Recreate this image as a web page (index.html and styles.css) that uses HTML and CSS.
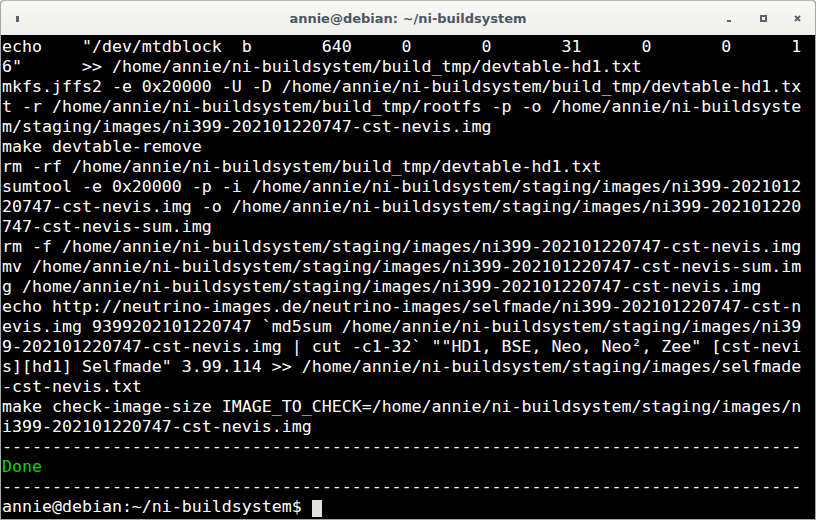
FILE: index.html
```html
<!DOCTYPE html>
<html>
<head>
<meta charset="utf-8">
<link rel="stylesheet" href="styles.css">
</head>
<body>
<div class="window">
  <div class="titlebar">
    <div class="tb-left"><span class="app-icon"></span></div>
    <div class="title">annie@debian: ~/ni-buildsystem</div>
    <div class="tb-right">
      <span class="btn btn-min"></span>
      <span class="btn btn-max"></span>
      <span class="btn btn-close">
        <svg width="7" height="7" viewBox="0 0 7 7"><path d="M1 1L6 6M6 1L1 6" stroke="#5b666e" stroke-width="2"/></svg>
      </span>
    </div>
  </div>
  <div class="term">
<div class="row">echo    "/dev/mtdblock  b       640     0       0       31      0       0      1</div>
<div class="row">6"      &gt;&gt; /home/annie/ni-buildsystem/build_tmp/devtable-hd1.txt</div>
<div class="row">mkfs.jffs2 -e 0x20000 -U -D /home/annie/ni-buildsystem/build_tmp/devtable-hd1.tx</div>
<div class="row">t -r /home/annie/ni-buildsystem/build_tmp/rootfs -p -o /home/annie/ni-buildsyste</div>
<div class="row">m/staging/images/ni399-202101220747-cst-nevis.img</div>
<div class="row">make devtable-remove</div>
<div class="row">rm -rf /home/annie/ni-buildsystem/build_tmp/devtable-hd1.txt</div>
<div class="row">sumtool -e 0x20000 -p -i /home/annie/ni-buildsystem/staging/images/ni399-2021012</div>
<div class="row">20747-cst-nevis.img -o /home/annie/ni-buildsystem/staging/images/ni399-202101220</div>
<div class="row">747-cst-nevis-sum.img</div>
<div class="row">rm -f /home/annie/ni-buildsystem/staging/images/ni399-202101220747-cst-nevis.img</div>
<div class="row">mv /home/annie/ni-buildsystem/staging/images/ni399-202101220747-cst-nevis-sum.im</div>
<div class="row">g /home/annie/ni-buildsystem/staging/images/ni399-202101220747-cst-nevis.img</div>
<div class="row">echo http://neutrino-images.de/neutrino-images/selfmade/ni399-202101220747-cst-n</div>
<div class="row">evis.img 9399202101220747 &#96;md5sum /home/annie/ni-buildsystem/staging/images/ni39</div>
<div class="row">9-202101220747-cst-nevis.img | cut -c1-32&#96; ""HD1, BSE, Neo, Neo², Zee" [cst-nevi</div>
<div class="row">s][hd1] Selfmade" 3.99.114 &gt;&gt; /home/annie/ni-buildsystem/staging/images/selfmade</div>
<div class="row">-cst-nevis.txt</div>
<div class="row">make check-image-size IMAGE_TO_CHECK=/home/annie/ni-buildsystem/staging/images/n</div>
<div class="row">i399-202101220747-cst-nevis.img</div>
<div class="row">--------------------------------------------------------------------------------</div>
<div class="row green">Done</div>
<div class="row">--------------------------------------------------------------------------------</div>
<div class="row">annie@debian:~/ni-buildsystem$ <span class="cursor"> </span></div>
  </div>
</div>
</body>
</html>
```

FILE: styles.css
```css
html, body {
  margin: 0;
  padding: 0;
  background: #ffffff;
}
.window {
  width: 816px;
  height: 520px;
  box-sizing: border-box;
  border: 1px solid #a8a8a8;
  border-top-color: #b9b9b9;
  border-radius: 4px 4px 0 0;
  overflow: hidden;
  display: flex;
  flex-direction: column;
  background: #000;
}
.titlebar {
  height: 34px;
  flex: none;
  display: flex;
  align-items: center;
  background: linear-gradient(#f8f8f7, #efefee);
}
.tb-left {
  width: 100px;
  display: flex;
  align-items: center;
  padding-left: 15px;
  box-sizing: border-box;
}
.app-icon {
  width: 3px;
  height: 6px;
  background: #5a666e;
  margin-top: 2px;
}
.title {
  flex: 1;
  text-align: center;
  font-family: "DejaVu Sans", sans-serif;
  font-weight: bold;
  font-size: 13px;
  color: #4c5760;
}
.tb-right {
  width: 100px;
  display: flex;
  align-items: center;
  justify-content: flex-end;
  padding-right: 14px;
  box-sizing: border-box;
}
.btn {
  display: flex;
  align-items: center;
  justify-content: center;
}
.btn-min {
  width: 4px;
  height: 2px;
  background: #5b666e;
  margin-top: 6px;
  margin-right: 29px;
}
.btn-max {
  width: 3px;
  height: 3px;
  border: 2px solid #5b666e;
  margin-right: 27px;
}
.btn-close {
  width: 7px;
  height: 7px;
}
.term {
  flex: 1;
  background: #000;
  padding: 1px 0 0 1px;
  color: #ffffff;
  font-family: "DejaVu Sans Mono", monospace;
  font-size: 16.6px;
  line-height: 20px;
}
.row {
  height: 20px;
  white-space: pre;
  position: relative;
  top: 1px;
}
.green {
  color: #12d012;
}
.cursor {
  display: inline-block;
  width: 10px;
  height: 17px;
  background: #e0e0e0;
  vertical-align: -3px;
}
```
